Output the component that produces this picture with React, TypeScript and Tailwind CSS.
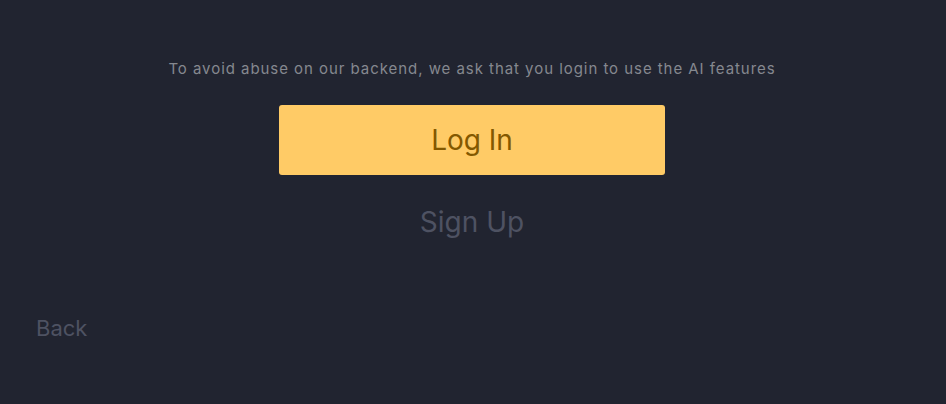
import React from "react";

export default function App() {
  return (
    <div
      className="w-[946px] h-[404px] bg-[#212430] flex flex-col"
      style={{ fontFamily: "Inter, 'Noto Sans', sans-serif" }}
    >
      <div className="flex flex-col items-center pt-[60px] pr-[2px]">
        <p className="text-[15px] leading-[18px] tracking-[0.95px] text-[#85888f]">
          To avoid abuse on our backend, we ask that you login to use the AI features
        </p>
        <button className="mt-[27px] w-[386px] h-[70px] rounded-[3px] bg-[#ffcb66] text-[#835800] text-[28px] flex items-center justify-center">
          Log In
        </button>
        <button className="mt-[29px] text-[28px] leading-[36px] text-[#4e5262]">
          Sign Up
        </button>
      </div>
      <div className="mt-[75px] pl-[36px]">
        <button className="text-[22px] leading-[26px] text-[#4e5262]">Back</button>
      </div>
    </div>
  );
}
